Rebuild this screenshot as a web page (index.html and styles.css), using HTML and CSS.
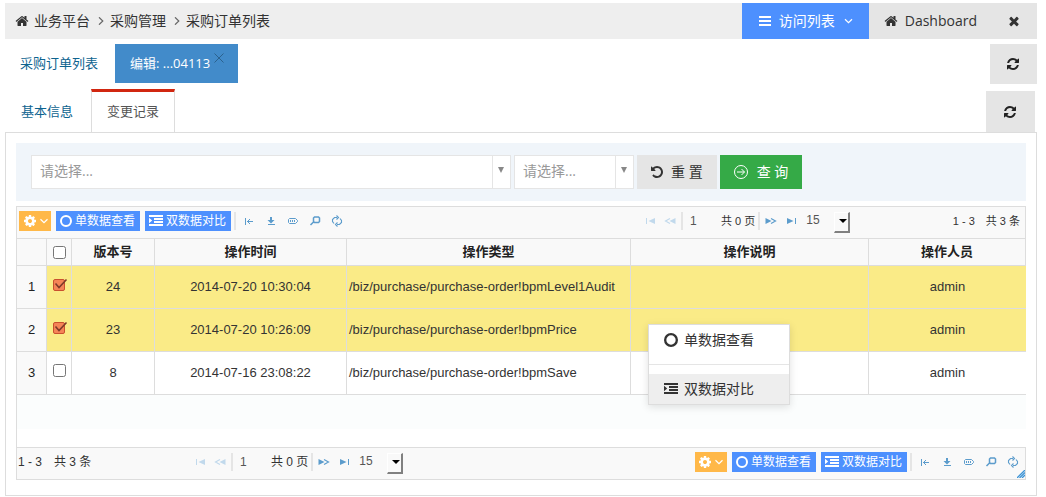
FILE: index.html
```html
<!DOCTYPE html>
<html lang="zh-CN">
<head>
<meta charset="utf-8">
<title>采购订单列表</title>
<link rel="stylesheet" href="styles.css">
</head>
<body>
<svg class="sprite" aria-hidden="true">
  <symbol id="home" viewBox="0 0 1792 1792"><path d="M1472 992v480q0 26-19 45t-45 19h-384v-384h-256v384h-384q-26 0-45-19t-19-45v-480q0-1 .5-3t.5-3l575-474 575 474q1 2 1 6zm223-69l-62 74q-8 9-21 11h-3q-13 0-21-7l-692-577-692 577q-12 8-24 7-13-2-21-11l-62-74q-8-10-7-23.5t11-21.5l719-599q32-26 76-26t76 26l244 204v-195q0-14 9-23t23-9h192q14 0 23 9t9 23v408l219 182q10 8 11 21.5t-7 23.5z"/></symbol>
  <symbol id="refresh" viewBox="0 0 1792 1792"><path d="M1639 1056q0 5-1 7-64 268-268 434.5t-478 166.5q-146 0-282.5-55t-243.5-157l-129 129q-19 19-45 19t-45-19-19-45v-448q0-26 19-45t45-19h448q26 0 45 19t19 45-19 45l-137 137q71 66 161 102t187 36q134 0 250-65t186-179q11-17 53-117 8-23 30-23h192q13 0 22.5 9.5t9.5 22.5zm25-800v448q0 26-19 45t-45 19h-448q-26 0-45-19t-19-45 19-45l138-138q-148-137-349-137-134 0-250 65t-186 179q-11 17-53 117-8 23-30 23h-199q-13 0-22.5-9.5t-9.5-22.5v-7q65-268 270-434.5t480-166.5q146 0 284 55.5t245 156.5l130-129q19-19 45-19t45 19 19 45z"/></symbol>
  <symbol id="times" viewBox="0 0 1792 1792"><path d="M1490 1322q0 40-28 68l-136 136q-28 28-68 28t-68-28l-294-294-294 294q-28 28-68 28t-68-28l-136-136q-28-28-28-68t28-68l294-294-294-294q-28-28-28-68t28-68l136-136q28-28 68-28t68 28l294 294 294-294q28-28 68-28t68 28l136 136q28 28 28 68t-28 68l-294 294 294 294q28 28 28 68z"/></symbol>
  <symbol id="undo" viewBox="0 0 1792 1792"><path d="M1664 896q0 156-61 298t-164 245-245 164-298 61q-172 0-327-72.5t-264-204.5q-7-10-6.5-22.5t8.5-20.5l137-138q10-9 25-9 16 2 23 12 73 95 179 147t225 52q104 0 198.5-40.5t163.5-109.5 109.5-163.5 40.5-198.5-40.5-198.5-109.5-163.5-163.5-109.5-198.5-40.5q-98 0-188 35.5t-160 101.5l137 138q31 30 14 69-17 40-59 40h-448q-26 0-45-19t-19-45v-448q0-42 40-59 39-17 69 14l130 129q107-101 244.5-156.5t284.5-55.5q156 0 298 61t245 164 164 245 61 298z"/></symbol>
  <symbol id="cog" viewBox="0 0 1792 1792"><path d="M1152 896q0-106-75-181t-181-75-181 75-75 181 75 181 181 75 181-75 75-181zm512-109v222q0 12-8 23t-20 13l-185 28q-19 54-39 91 35 50 107 138 10 12 10 25t-9 23q-27 37-99 108t-94 71q-12 0-26-9l-138-108q-44 23-91 38-16 136-29 186-7 28-36 28h-222q-14 0-24.5-8.5t-11.5-21.5l-28-184q-49-16-90-37l-141 107q-10 9-25 9-14 0-25-11-126-114-165-168-7-10-7-23 0-12 8-23 15-21 51-66.5t54-70.5q-27-50-41-99l-183-27q-13-2-21-12.5t-8-23.5v-222q0-12 8-23t19-13l186-28q14-46 39-92-40-57-107-138-10-12-10-24 0-10 9-23 26-36 98.5-107.5t94.5-71.5q13 0 26 10l138 107q44-23 91-38 16-136 29-186 7-28 36-28h222q14 0 24.5 8.5t11.5 21.5l28 184q49 16 90 37l142-107q9-9 24-9 13 0 25 10 129 119 165 170 7 8 7 22 0 12-8 23-15 21-51 66.5t-54 70.5q26 50 41 98l183 28q13 2 21 12.5t8 23.5z"/></symbol>
  <symbol id="bars" viewBox="0 0 14 14"><path d="M1 2h12v2H1zM1 6h12v2H1zM1 10h12v2H1z"/></symbol>
  <symbol id="ring" viewBox="1 1 12 12"><circle cx="7" cy="7" r="5" fill="none" stroke="currentColor" stroke-width="2"/></symbol>
  <symbol id="indent" viewBox="0 0 14 14"><path d="M0 1h14v2H0zM5 4h9v2H5zM5 7h9v2H5zM0 10h14v2H0zM0 3.800L3.200 6.500 0 9.200z"/></symbol>
  <symbol id="down" viewBox="0 0 8 8"><path d="M.5 2.300L4 5.700l3.500-3.400" fill="none" stroke="currentColor" stroke-width="1.200"/></symbol>
  <symbol id="right" viewBox="0 0 8 8"><path d="M2 .3L5.800 4 2 7.700" fill="none" stroke="currentColor" stroke-width="1.200"/></symbol>
  <symbol id="cross" viewBox="0 0 10 10"><path d="M.5.500l9 9m0-9l-9 9" fill="none" stroke="currentColor"/></symbol>
  <symbol id="go" viewBox="0 0 14 14"><g fill="none" stroke="currentColor"><circle cx="7" cy="7" r="6.500"/><path d="M3 7h7.500M7.500 4l3 3-3 3"/></g></symbol>
  <symbol id="collapse" viewBox="0 0 10 10"><path d="M1 2h1v7H1zM3 5h6v1H3zM4 4h1v3H4zM5 3h1v1H5zM5 7h1v1H5z"/></symbol>
  <symbol id="save" viewBox="0 0 10 10"><path d="M4 1h2v3h2.500L5 7.500 1.500 4H4zM2 8h7v1H2z"/></symbol>
  <symbol id="tag" viewBox="0 0 12 10"><path d="M2.500 2.500h6l2 2v1l-2 2h-6l-1-1v-3z" fill="none" stroke="currentColor"/><path d="M3 4h1v2H3zM5 4h1v2H5zM7 4h1v2H7z"/></symbol>
  <symbol id="search" viewBox="0 0 12 10"><path d="M5.500 1h4l1 1v3.500l-1 1h-4l-1-1V2zM4.500 6L1.500 9" fill="none" stroke="currentColor" stroke-width="1.500"/></symbol>
  <symbol id="reload" viewBox="0 0 12 12"><path d="M6 2.500H3.500l-2 2v2l1.500 2M6 9.500h2.500l2-2v-2L9 3.500M5.500.500l2 2-2 2M6.500 7.500l-2 2 2 2" fill="none" stroke="currentColor" stroke-width="1.100"/></symbol>
  <symbol id="first" viewBox="0 0 10 8"><path d="M0 1h1v6H0zM9 1v6L2.500 4z"/></symbol>
  <symbol id="prev" viewBox="0 0 12 8"><path d="M11.500 1v6L5.500 4z"/><path d="M6 1.500L1.500 4 6 6.500" fill="none" stroke="currentColor" stroke-width="1.200"/></symbol>
  <symbol id="next" viewBox="0 0 12 8"><path d="M.5 1v6l6-3z"/><path d="M6 1.500L10.500 4 6 6.500" fill="none" stroke="currentColor" stroke-width="1.200"/></symbol>
  <symbol id="last" viewBox="0 0 10 8"><path d="M9 1h1v6H9zM1 1v6l6.500-3z"/></symbol>
  <symbol id="tick" viewBox="0 0 15 13"><rect x=".5" y="1.500" width="11" height="11" rx="1.500" fill="#f58457" stroke="#c9502f"/><path d="M2.500 5.500L6 9.500 13.500 1.500" fill="none" stroke="#7d3a2a" stroke-width="1.600"/></symbol>
</svg>

<header class="topbar">
  <nav class="crumbs">
    <svg class="i14"><use href="#home"/></svg><a href="#">业务平台</a>
    <svg class="i8"><use href="#right"/></svg><a href="#">采购管理</a>
    <svg class="i8"><use href="#right"/></svg><a href="#">采购订单列表</a>
  </nav>
  <button class="top-btn visit"><svg class="i14"><use href="#bars"/></svg>访问列表<svg class="i8"><use href="#down"/></svg></button>
  <button class="top-btn dash"><svg class="i14"><use href="#home"/></svg>Dashboard</button>
  <button class="top-btn close" aria-label="关闭"><svg class="i14"><use href="#times"/></svg></button>
</header>

<nav class="pages">
  <a class="page" href="#">采购订单列表</a>
  <div class="page current"><a href="#">编辑: ...04113</a><button aria-label="关闭标签"><svg class="i10"><use href="#cross"/></svg></button></div>
  <button class="refresh" aria-label="刷新页面"><svg class="i14"><use href="#refresh"/></svg></button>
</nav>

<nav class="tabs">
  <a class="tab" href="#">基本信息</a>
  <a class="tab active" href="#">变更记录</a>
  <button class="refresh" aria-label="刷新标签"><svg class="i14"><use href="#refresh"/></svg></button>
</nav>

<main class="panel">
  <form class="filter">
    <span class="picker wide"><select aria-label="条件"><option>请选择...</option></select></span>
    <span class="picker"><select aria-label="类型"><option>请选择...</option></select></span>
    <button class="btn" type="reset"><svg class="i14"><use href="#undo"/></svg>重 置</button>
    <button class="btn query" type="button"><svg class="i14"><use href="#go"/></svg>查 询</button>
  </form>

  <section class="grid">
    <div class="bar bar-top">
      <div class="tools">
        <button class="tool gear" aria-label="设置"><svg class="i14"><use href="#cog"/></svg><svg class="i8"><use href="#down"/></svg></button>
        <button class="tool"><svg class="i12"><use href="#ring"/></svg>单数据查看</button>
        <button class="tool"><svg class="i14"><use href="#indent"/></svg>双数据对比</button>
        <span class="sep"></span>
        <div class="links">
          <button aria-label="收起"><svg class="i10"><use href="#collapse"/></svg></button>
          <button aria-label="导出"><svg class="i10"><use href="#save"/></svg></button>
          <button aria-label="列"><svg class="i12 short"><use href="#tag"/></svg></button>
          <button aria-label="搜索"><svg class="i12 short"><use href="#search"/></svg></button>
          <button aria-label="刷新"><svg class="i12"><use href="#reload"/></svg></button>
        </div>
      </div>
      <div class="pager">
        <button class="off" aria-label="首页"><svg class="i10"><use href="#first"/></svg></button>
        <button class="off" aria-label="上一页"><svg class="i12"><use href="#prev"/></svg></button>
        <span class="sep"></span>
        <input class="num" value="1" aria-label="页码">
        <span class="total">共 0 页</span>
        <span class="sep"></span>
        <button aria-label="下一页"><svg class="i12"><use href="#next"/></svg></button>
        <button aria-label="末页"><svg class="i10"><use href="#last"/></svg></button>
        <span class="size"><select aria-label="每页条数"><option>15</option></select></span>
      </div>
      <div class="info"><span>1 - 3</span><span>共 3 条</span></div>
    </div>

    <div class="body">
      <table>
        <colgroup><col class="c-no"><col class="c-check"><col class="c-ver"><col class="c-time"><col class="c-type"><col class="c-note"><col></colgroup>
        <thead>
          <tr><th></th><th><input type="checkbox" aria-label="全选"></th><th>版本号</th><th>操作时间</th><th>操作类型</th><th>操作说明</th><th>操作人员</th></tr>
        </thead>
        <tbody>
          <tr class="picked"><td class="no">1</td><td><span class="check"><input type="checkbox" checked aria-label="选择 1"><svg><use href="#tick"/></svg></span></td><td>24</td><td>2014-07-20 10:30:04</td><td class="left">/biz/purchase/purchase-order!bpmLevel1Audit</td><td></td><td>admin</td></tr>
          <tr class="picked"><td class="no">2</td><td><span class="check"><input type="checkbox" checked aria-label="选择 2"><svg><use href="#tick"/></svg></span></td><td>23</td><td>2014-07-20 10:26:09</td><td class="left">/biz/purchase/purchase-order!bpmPrice</td><td></td><td>admin</td></tr>
          <tr><td class="no">3</td><td><span class="check"><input type="checkbox" aria-label="选择 3"></span></td><td>8</td><td>2014-07-16 23:08:22</td><td class="left">/biz/purchase/purchase-order!bpmSave</td><td></td><td>admin</td></tr>
        </tbody>
      </table>
    </div>

    <div class="bar bar-bottom">
      <div class="info"><span>1 - 3</span><span>共 3 条</span></div>
      <div class="pager">
        <button class="off" aria-label="首页"><svg class="i10"><use href="#first"/></svg></button>
        <button class="off" aria-label="上一页"><svg class="i12"><use href="#prev"/></svg></button>
        <span class="sep"></span>
        <input class="num" value="1" aria-label="页码">
        <span class="total">共 0 页</span>
        <span class="sep"></span>
        <button aria-label="下一页"><svg class="i12"><use href="#next"/></svg></button>
        <button aria-label="末页"><svg class="i10"><use href="#last"/></svg></button>
        <span class="size"><select aria-label="每页条数"><option>15</option></select></span>
      </div>
      <div class="tools">
        <button class="tool gear" aria-label="设置"><svg class="i14"><use href="#cog"/></svg><svg class="i8"><use href="#down"/></svg></button>
        <button class="tool"><svg class="i12"><use href="#ring"/></svg>单数据查看</button>
        <button class="tool"><svg class="i14"><use href="#indent"/></svg>双数据对比</button>
        <span class="sep"></span>
        <div class="links">
          <button aria-label="收起"><svg class="i10"><use href="#collapse"/></svg></button>
          <button aria-label="导出"><svg class="i10"><use href="#save"/></svg></button>
          <button aria-label="列"><svg class="i12 short"><use href="#tag"/></svg></button>
          <button aria-label="搜索"><svg class="i12 short"><use href="#search"/></svg></button>
          <button aria-label="刷新"><svg class="i12"><use href="#reload"/></svg></button>
        </div>
      </div>
      <svg class="grip" viewBox="0 0 8 8" aria-hidden="true"><path d="M0 8l8-8M2.500 8L8 2.500M5 8l3-3" fill="none" stroke="currentColor" stroke-width="1.300"/></svg>
    </div>
  </section>
</main>

<div class="menu">
  <button><svg class="i14"><use href="#ring"/></svg>单数据查看</button>
  <hr>
  <button class="hover"><svg class="i14"><use href="#indent"/></svg>双数据对比</button>
</div>
</body>
</html>
```

FILE: styles.css
```css
* { box-sizing: border-box; }
body {
  margin: 0;
  padding: 3px 9px 0 5px;
  position: relative;
  background: #fff;
  color: #333;
  font: 14px/20px "Open Sans", "Noto Sans CJK SC", sans-serif;
}
a { color: inherit; text-decoration: none; }
button {
  margin: 0; padding: 0; border: 0; background: none;
  color: inherit; font: inherit;
  display: flex; align-items: center; justify-content: center;
}
svg { fill: currentColor; flex: none; display: block; }
.sprite { position: absolute; width: 0; height: 0; }
.i8 { width: 8px; height: 8px; }
.i10 { width: 10px; height: 10px; }
.i12 { width: 12px; height: 12px; }
.i12.short { height: 10px; }
.i14 { width: 14px; height: 14px; }

.topbar { display: flex; height: 36px; background: #eee; }
.crumbs { flex: 1; display: flex; align-items: center; padding-left: 10px; }
.crumbs .i14 { margin-right: 5px; }
.crumbs .i8 { margin: 0 5px 0 7px; color: #666; }
.top-btn { gap: 7px; padding: 0 15px; background: #e5e5e5; }
.top-btn.visit { background: #4d90fe; color: #fff; padding: 0 16px; }
.top-btn.visit .i8 { margin-left: 2px; width: 9px; }
.top-btn.dash { padding-right: 16px; }
.top-btn.close { padding: 0 16px 0 14px; }

.pages { display: flex; align-items: flex-start; margin-top: 5px; height: 45px; font-size: 13px; color: #0d638f; }
.page { padding: 9px 15px 10px; }
.page.current { display: flex; margin-left: 2px; padding: 9px 14px 10px 15px; background: #428bca; color: #fff; gap: 4px; align-items: flex-start; }
.page.current .i10 { color: #2b628f; }
.refresh { margin-left: auto; padding-right: 2px; width: 47px; height: 40px; background: #e5e5e5; color: #222; }

.tabs { display: flex; align-items: flex-end; height: 43px; font-size: 13px; color: #0d638f; }
.tab { padding: 12px 18px 11px 16px; }
.tab.active { border: 1px solid #ddd; border-width: 3px 1px 0; border-top-color: #d12610; padding: 9px 15px 11px; color: #555; background: #fff; }
.tabs .refresh { margin-right: 2px; width: 49px; height: 41px; }

.panel { border: 1px solid #ddd; padding: 10px 10px 15px; }
.filter { display: flex; gap: 3px; padding: 12px 15px; background: #f0f5fa; }
.picker { position: relative; flex: 0 1 120px; height: 34px; }
.picker.wide { flex-basis: 480px; }
.picker select {
  appearance: none; width: 100%; height: 34px; padding: 0 28px 2px 8px;
  border: 1px solid #e5e5e5; border-radius: 0; background: #fff; color: #999; font: inherit;
}
.picker::before { content: ""; position: absolute; right: 18px; top: 1px; width: 1px; height: 32px; background: #e5e5e5; }
.picker::after { content: ""; position: absolute; right: 7px; top: 12px; border: 3px solid transparent; border-top: 6px solid #888; border-bottom: 0; }
.btn { gap: 7px; padding: 0 14px 0 13px; background: #e5e5e5; }
.btn.query { background: #35aa47; color: #fff; gap: 9px; padding: 0 14px; }

.grid { margin-top: 5px; border: 1px solid #ddd; border-right: 0; }
.bar {
  position: relative; display: grid; height: 31px; align-items: center;
  background: #f9f9f9; border-right: 1px solid #ddd;
  font: 12px/18px "Liberation Sans", "Noto Sans CJK SC", sans-serif; color: #333;
}
.bar-top { grid-template-columns: 1fr 209px 175px; padding-bottom: 3px; }
.bar-top .info, .bar-top .total { font-size: 11px; }
.bar-bottom { grid-template-columns: 174px 212px 1fr; border-top: 1px solid #ddd; height: 32px; padding-bottom: 3px; }
.tools { display: flex; align-items: center; padding-left: 2px; }
.bar-bottom .tools { justify-content: flex-end; padding-right: 1px; }
.tool { height: 20px; gap: 3px; padding: 0 5px 0 4px; margin-right: 5px; background: #4d90fe; color: #fff; font-family: "Open Sans", "Noto Sans CJK SC", sans-serif; }
.tool.gear { width: 32px; padding: 0 4px; gap: 3px; background: #ffb848; }
.tool + .sep { margin-left: -2px; }
.sep { width: 2px; height: 18px; background: #e5e5e5; }
.links { display: flex; margin-left: 2px; color: #5c9ccc; }
.links button { width: 22px; height: 20px; }
.pager { display: flex; align-items: center; }
.pager button { width: 20px; height: 20px; color: #5c9ccc; }
.pager .i10 { height: 8px; }
.pager .i12 { height: 8px; }
.pager button.off { width: 19px; color: #c1d9ec; }
.pager button.off + .sep { margin: 0 4px 0 2px; }
.pager .num { width: 30px; height: 20px; margin-right: 4px; padding: 0 3px; border: 0; background: none; color: #555; font: inherit; }
.total + .sep { margin: 0 1px 0 3px; }
.size { position: relative; height: 20px; flex: 1; }
.size select { appearance: none; width: 100%; height: 16px; padding: 0 0 0 5px; border: 0; background: none; color: #555; font: inherit; }
.size::before { content: ""; position: absolute; right: 0; top: 1px; width: 13px; height: 18px; background: #f9f9f9; border: 1px solid #fff; border-width: 1px 2px 2px 1px; border-right-color: #808080; border-bottom-color: #808080; }
.size::after { content: ""; position: absolute; right: 3px; top: 8px; border: 4px solid transparent; border-top: 4px solid #000; border-bottom: 0; }
.info { display: flex; gap: 11px; justify-content: flex-end; padding-right: 5px; }
.bar-bottom .info { gap: 12px; justify-content: flex-start; padding: 0 0 0 1px; }
.grip { position: absolute; right: 0; bottom: 1px; width: 8px; height: 8px; color: #3d94d6; }

.body { min-height: 209px; border-top: 1px solid #ddd; background: linear-gradient(#fbfdfd 190px, #fff 190px); }
table { width: 100%; table-layout: fixed; border-collapse: separate; border-spacing: 0; font: 13px/18px "Liberation Sans", "Noto Sans CJK SC", sans-serif; }
.c-no { width: 30px; }
.c-check { width: 25px; }
.c-ver { width: 83px; }
.c-time { width: 192px; }
.c-type { width: 284px; }
.c-note { width: 238px; }
th, td { padding: 0; text-align: center; border-right: 1px solid #ddd; border-bottom: 1px solid #ddd; }
th { height: 27px; background: #f9f9f9; color: #222; }
td { height: 43px; background: #fff; }
td:last-child { border-right: 0; }
.picked td { background: #faeb87; }
td.no, .picked td.no { background: #f9f9f9; color: #222; }
td.left { text-align: left; padding-left: 2px; }
th input, td input { display: block; width: 13px; height: 13px; margin: 0 auto; }
.check { position: relative; display: block; width: 13px; margin: 0 auto 6px; }
.check svg { position: absolute; left: 0; top: 0; width: 15px; height: 13px; }
.check input:checked { opacity: 0; }

.menu { position: absolute; left: 648px; top: 324px; width: 142px; border: 1px solid #ddd; background: #fff; box-shadow: 0 2px 8px rgba(0,0,0,.12); }
.menu button { width: 100%; height: 30px; gap: 6px; padding-left: 15px; justify-content: flex-start; }
.menu hr { margin: 9px 0; border: 0; border-top: 1px solid #e5e5e5; }
.menu .hover { background: #eee; }
```
